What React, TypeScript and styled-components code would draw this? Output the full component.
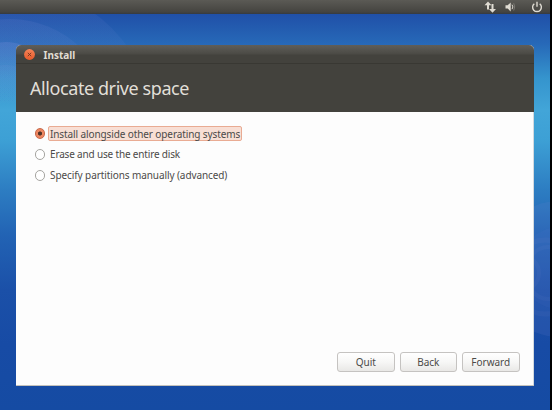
import React, { useState } from "react";
import styled, { createGlobalStyle } from "styled-components";

const GlobalStyle = createGlobalStyle`
  html, body { margin: 0; background: #000; overflow: hidden; }
  * { box-sizing: border-box; }
`;

const Desktop = styled.div`
  position: relative;
  width: 550px;
  height: 410px;
  overflow: hidden;
  display: flex;
  flex-direction: column;
  font-family: "Noto Sans", sans-serif;
  background: linear-gradient(#2050a8 14px, #2769b8 44px, #3594cd 78px, #42a5d8 110px, #3da0d5 140px, #2d7dc2 190px, #2263b4 235px, #1b50a8 290px, #174ba5 345px, #154ba3 410px);
`;

const Wallpaper = styled.svg`
  position: absolute;
  inset: 0;
`;

const Panel = styled.header`
  position: relative;
  height: 14px;
  flex: none;
  display: flex;
  justify-content: flex-end;
  background: linear-gradient(#5b5a55, #454440 85%, #343a42);
`;

const Indicators = styled.svg`
  display: block;
  width: 70px;
  height: 14px;
`;

const Window = styled.main`
  position: relative;
  width: 518px;
  height: 341px;
  margin: 31px 0 0 16px;
  display: flex;
  flex-direction: column;
  border-radius: 5px 5px 0 0;
  background: #fdfdfd;
  box-shadow: inset 0 -1px #c4c2bc, inset -1px 0 #d2d9df;
`;

const TitleBar = styled.div`
  height: 19px;
  flex: none;
  display: flex;
  align-items: center;
  gap: 8.5px;
  padding-left: 8px;
  border-radius: 5px 5px 0 0;
  border-top: 1px solid #5e5d58;
  border-bottom: 1px solid #393833;
  background: linear-gradient(#5d5c57, #4b4a45 8px, #43423d 9px);
`;

const CloseIcon = styled.svg`
  display: block;
  width: 11px;
  height: 11px;
`;

const Title = styled.span`
  color: #e0ddd3;
  font-size: 10px;
  font-weight: 700;
  line-height: 16px;
  letter-spacing: 0;
`;

const Heading = styled.h1`
  height: 48px;
  flex: none;
  margin: 0;
  padding-left: 14px;
  color: #e1dfd8;
  background: #43423d;
  font-size: 18px;
  font-weight: 400;
  line-height: 49px;
  letter-spacing: -0.42px;
`;

const Options = styled.div`
  flex: 1;
  display: flex;
  flex-direction: column;
  align-items: flex-start;
  gap: 6px;
  padding: 14px 0 0 18.5px;
`;

const Option = styled.label`
  height: 15px;
  display: flex;
  align-items: center;
  gap: 3px;
`;

const Radio = styled.input`
  appearance: none;
  width: 10.5px;
  height: 10.5px;
  margin: 0;
  border: 1px solid #a6a5a1;
  border-radius: 50%;
  background: #fff;
  &:checked {
    border-color: #c7694b;
    background: radial-gradient(circle, #4e3328 0 1.7px, #ed8660 2.4px);
  }
`;

const OptionLabel = styled.span<{ $selected: boolean; $spacing: number }>`
  height: 15px;
  padding: 0 1px;
  border: 1px solid ${(p) => (p.$selected ? "#e9ab93" : "transparent")};
  border-radius: 2px;
  background: ${(p) => (p.$selected ? "#f8dfd5" : "transparent")};
  color: #4b4a48;
  font-size: 10px;
  line-height: ${(p) => (p.$selected ? 14 : 13)}px;
  letter-spacing: ${(p) => p.$spacing}px;
  white-space: nowrap;
`;

const Actions = styled.footer`
  display: flex;
  justify-content: flex-end;
  gap: 5px;
  padding: 0 14.5px 14px 0;
`;

const Button = styled.button`
  width: 57.5px;
  height: 20px;
  padding: 0;
  border: 1px solid #c5c3c1;
  border-radius: 3px;
  background: linear-gradient(#fff, #f7f7f6 50%, #e9e8e6);
  color: #4b4a48;
  font: 10px/17px "Noto Sans", sans-serif;
  letter-spacing: 0;
`;

const choices = [
  { text: "Install alongside other operating systems", spacing: -0.105 },
  { text: "Erase and use the entire disk", spacing: -0.17 },
  { text: "Specify partitions manually (advanced)", spacing: -0.09 },
];

export default function App() {
  const [selected, setSelected] = useState(0);
  return (
    <>
      <GlobalStyle />
      <Desktop>
        <Wallpaper width="550" height="410" viewBox="0 0 550 410" aria-hidden="true">
          <defs>
            <linearGradient id="haze" gradientUnits="userSpaceOnUse" x1="0" y1="14" x2="0" y2="105">
              <stop stopColor="#8c96e0" /><stop offset="1" stopColor="#8c96e0" stopOpacity="0" />
            </linearGradient>
          </defs>
          <g fill="url(#haze)">
            <circle cx="10" cy="130" r="144" opacity=".09" />
            <circle cx="10" cy="120" r="101" opacity=".12" />
            <circle cx="6" cy="88" r="46" opacity=".3" />
            <circle cx="6" cy="100" r="35" opacity=".2" />
          </g>
          <g fill="#7d8bd8">
            <circle cx="560" cy="269" r="68" opacity=".12" />
            <circle cx="560" cy="268" r="41" opacity=".06" />
          </g>
          <g fill="none" stroke="#8790d3" opacity=".07">
            <circle cx="522" cy="273" r="17" strokeWidth="4" />
            <ellipse cx="545" cy="277" rx="34" ry="37" strokeWidth="5" />
            <ellipse cx="548" cy="273" rx="22" ry="26" strokeWidth="4" />
          </g>
        </Wallpaper>
        <Panel>
          <Indicators viewBox="0 0 70 14" fill="none" stroke="#dfdbd2" aria-label="System indicators">
            <path d="M8 9.5V4M12.5 4v5" strokeWidth="2" />
            <path d="m4.5 5.3 3.5-3.8 3.5 3.8ZM9 8.9h7l-3.5 3.8Z" fill="#dfdbd2" stroke="none" />
            <path d="M25.5 5.2h2.2l3-2.8v9l-3-2.8h-2.2Z" fill="#dfdbd2" stroke="none" />
            <path d="M32 4.7q1.8 2.2 0 4.5" strokeWidth="1" />
            <path d="M33.7 3.3q2 3.6 0 7.2" strokeWidth=".9" opacity=".35" />
            <path d="M54.3 3.7a4.4 4.4 0 1 0 5.4 0M57 1.8v5" strokeWidth="1.4" />
          </Indicators>
        </Panel>
        <Window>
          <TitleBar>
            <CloseIcon viewBox="0 0 11 11" role="img" aria-label="Close">
              <defs>
                <linearGradient id="close" x2="0" y2="1"><stop stopColor="#f58358" /><stop offset="1" stopColor="#e75a2b" /></linearGradient>
              </defs>
              <circle cx="5.5" cy="5.5" r="5.4" fill="url(#close)" />
              <path d="m3.8 3.8 3.4 3.4m0-3.4L3.8 7.2" stroke="#70351f" strokeWidth=".9" />
            </CloseIcon>
            <Title>Install</Title>
          </TitleBar>
          <Heading>Allocate drive space</Heading>
          <Options>
            {choices.map((choice, i) => (
              <Option key={choice.text}>
                <Radio type="radio" name="space" checked={selected === i} onChange={() => setSelected(i)} />
                <OptionLabel $selected={selected === i} $spacing={choice.spacing}>{choice.text}</OptionLabel>
              </Option>
            ))}
          </Options>
          <Actions>
            <Button>Quit</Button>
            <Button>Back</Button>
            <Button>Forward</Button>
          </Actions>
        </Window>
      </Desktop>
    </>
  );
}
